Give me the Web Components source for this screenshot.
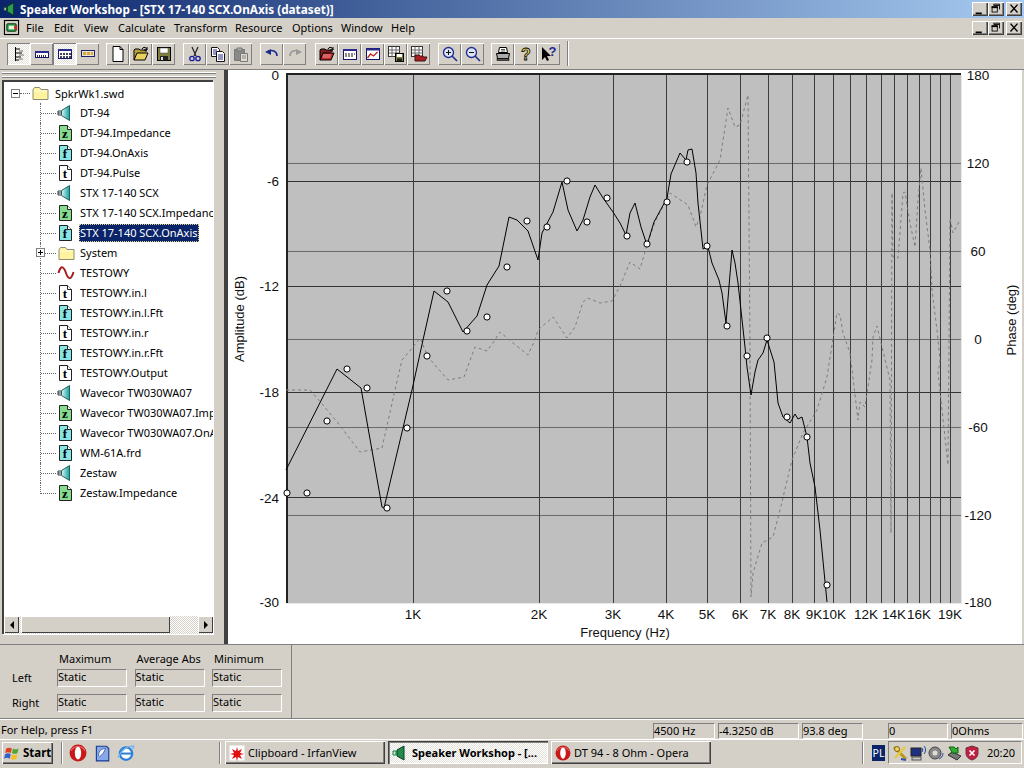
<!DOCTYPE html>
<html><head><meta charset="utf-8"><title>Speaker Workshop</title>
<style>html,body{margin:0;padding:0;background:#D4D0C8;overflow:hidden}</style>
</head><body>
<sw-app>
  <sw-titlebar>Speaker Workshop - [STX 17-140 SCX.OnAxis (dataset)]</sw-titlebar>
  <sw-menubar></sw-menubar>
  <sw-toolbar></sw-toolbar>
  <sw-workspace>
    <sw-tree></sw-tree>
    <sw-chart></sw-chart>
  </sw-workspace>
  <sw-stats></sw-stats>
  <sw-status></sw-status>
  <sw-taskbar></sw-taskbar>
</sw-app>
<script>
const FONT='"Noto Sans","Liberation Sans",sans-serif';
const s=(b,w=16,h=16)=>`<svg xmlns="http://www.w3.org/2000/svg" width="${w}" height="${h}" viewBox="0 0 16 16" style="display:block;overflow:visible">${b}</svg>`;
const docL=(fill,l,fs=11)=>s(`<path d="M2.5 .5h8l4 4v11h-12z" fill="${fill}" stroke="#222"/><path d="M10.5 .5v4h4" fill="#fff" stroke="#222"/><text x="8" y="13" text-anchor="middle" font-family="'Liberation Serif',serif" font-weight="700" font-size="${fs+2}" fill="#000">${l}</text>`);
const I={
 speaker:s(`<defs><linearGradient id="sp" x1="0" x2="1"><stop offset="0" stop-color="#d8f4f2"/><stop offset="1" stop-color="#12a2a0"/></linearGradient></defs><path d="M1 6h3M1 8h3M1 10h3M1 6v4" stroke="#333" fill="none"/><path d="M4.5 5.500 12.500 .5v15l-8-5z" fill="url(#sp)" stroke="#26605e"/>`),
 z:docL('#86dc8c','z'),f:docL('#86e6e6','f'),t:docL('#fff','t'),
 folder:s(`<path d="M.5 4.500 2 2.500h5l1.500 2h7v10h-15z" fill="#fff3a0" stroke="#8c8c70"/><path d="M1.500 5.500h13v1h-13z" fill="#fffce0"/>`,19,16),
 wave:s(`<path d="M.5 8C3-1 6 2 8 8s5 8 7.500-1" fill="none" stroke="#a81e1e" stroke-width="2"/>`,18,16),
 tv:s(`<path d="M4.500 1v14" stroke="#000"/><path d="M5 3h4M5 7h6M5 11h5M5 14h3" stroke="#000"/><path d="M8 5h4M8 9h5M8 13h4" stroke="#777"/>`),
 b1:s(`<rect x="1.500" y="5.500" width="13" height="6" fill="#fff" stroke="#15156a"/><path d="M1 5h14v2H1z" fill="#2a2a8e"/><path d="M3 9h1v2H3zM5 9h1v2H5zM7 9h1v2H7zM9 9h1v2H9zM11 9h1v2h-1z" fill="#333"/>`),
 b2:s(`<rect x="1.500" y="3.500" width="13" height="9" fill="#fff" stroke="#15156a"/><path d="M1 3h14v2H1z" fill="#2a2a8e"/><path d="M3 7h2v2H3zM6 7h2v2H6zM9 7h2v2H9zM12 7h2v2h-2zM3 10h2v2H3zM6 10h2v2H6zM9 10h2v2H9zM12 10h2v2h-2z" fill="#445"/>`),
 b3:s(`<rect x="1.500" y="4.500" width="13" height="6" fill="#e8e4dc" stroke="#22226a"/><path d="M3 6h3v3H3zM7 6h3v3H7zM11 6h2v3h-2z" fill="#d8a830"/>`),
 neu:s(`<path d="M3 .5h7l3 3v12H3z" fill="#fff" stroke="#000"/><path d="M10 .5v3h3" fill="none" stroke="#000"/>`),
 open:s(`<path d="M1 14V4l1-1h4l1 1h6v2" fill="#b8a040" stroke="#000"/><path d="M1 14l3-7h11l-3 7z" fill="#e8d060" stroke="#000"/><path d="M9 3c1-2 3-2 4-1l1 2m0-3v3h-3" fill="none" stroke="#000"/>`),
 save:s(`<rect x="1.500" y="1.500" width="13" height="13" fill="#808040" stroke="#000"/><rect x="4" y="2" width="8" height="5" fill="#fff" stroke="#444" stroke-width=".5"/><rect x="4" y="10" width="8" height="4.500" fill="#222"/><rect x="5" y="11" width="2" height="3" fill="#ddd"/>`),
 cut:s(`<path d="M5 1l4 9M11 1L7 10" stroke="#222" stroke-width="1.200" fill="none"/><circle cx="5" cy="12.500" r="2.200" fill="none" stroke="#1a1aa0" stroke-width="1.300"/><circle cx="11" cy="12.500" r="2.200" fill="none" stroke="#1a1aa0" stroke-width="1.300"/>`),
 copy:s(`<path d="M1.500 1.500h6l2 2v7h-8z" fill="#fff" stroke="#111"/><path d="M6.500 5.500h6l2 2v8h-8z" fill="#fff" stroke="#111"/><path d="M3 4h4M3 6h4M3 8h3M8 9h5M8 11h5M8 13h5" stroke="#2a2a8e"/>`),
 paste:s(`<path d="M1.500 3.500h10v11h-10z" fill="#8a8a8a" stroke="#777"/><path d="M4 2h5v3H4z" fill="#aaa" stroke="#777"/><path d="M7.500 7.500h7v8h-7z" fill="#dedad2" stroke="#777"/><path d="M9 10h4M9 12h4" stroke="#888"/>`),
 undo:s(`<path d="M3 6c5-3 10-1 10 4" fill="none" stroke="#1a2a8e" stroke-width="1.600"/><path d="M1 6l6-3v6z" fill="#1a2a8e"/>`),
 redo:s(`<path d="M13 6C8 3 3 5 3 10" fill="none" stroke="#999" stroke-width="1.600"/><path d="M15 6L9 3v6z" fill="#999"/>`),
 ropen:s(`<path d="M1 14V4l1-1h4l1 1h6v2" fill="#802020" stroke="#000"/><path d="M1 14l3-7h11l-3 7z" fill="#c02828" stroke="#000"/><path d="M4 9h8M3.500 11h8" stroke="#e8a0a0"/><path d="M9 3c1-2 3-2 4-1l1 2m0-3v3h-3" fill="none" stroke="#000"/>`),
 win1:s(`<rect x="1.500" y="3.500" width="13" height="10" fill="#fff" stroke="#15156a"/><path d="M1 3h14v2H1z" fill="#2a2a8e"/><path d="M3 8h10M3 10h9" stroke="#111" stroke-dasharray="2 1"/>`),
 win2:s(`<rect x="1.500" y="2.500" width="13" height="11" fill="#fff" stroke="#15156a"/><path d="M1 2.500h14v2H1z" fill="#2a2a8e"/><path d="M2.500 12l3-4 3 2 4-4" fill="none" stroke="#c02020" stroke-width="1.300"/>`),
 gsave:s(`<rect x=".5" y=".5" width="11" height="10" fill="#fff" stroke="#333"/><path d="M4 1v10M8 1v10M1 4h11M1 7h11" stroke="#666"/><rect x="7.500" y="7.500" width="8" height="8" fill="#808040" stroke="#000"/><rect x="9" y="8" width="5" height="3" fill="#fff"/><rect x="9" y="12.500" width="5" height="3" fill="#222"/>`),
 gopen:s(`<rect x=".5" y=".5" width="11" height="10" fill="#fff" stroke="#333"/><path d="M4 1v10M8 1v10M1 4h11M1 7h11" stroke="#666"/><path d="M4 15V9h4l1 1h3v1l4 0-2 4z" fill="#a82020" stroke="#401010"/>`),
 zin:s(`<circle cx="6.500" cy="6.500" r="5" fill="#dde2f5" stroke="#1d2a90" stroke-width="1.300"/><path d="M10 10l5 5" stroke="#1d2a90" stroke-width="1.600"/><path d="M4 6.500h5M6.500 4v5" stroke="#111"/>`),
 zout:s(`<circle cx="6.500" cy="6.500" r="5" fill="#dde2f5" stroke="#1d2a90" stroke-width="1.300"/><path d="M10 10l5 5" stroke="#1d2a90" stroke-width="1.600"/><path d="M4 6.500h5" stroke="#111"/>`),
 print:s(`<path d="M4.500 1.500h7l1 5h-9z" fill="#fff" stroke="#000"/><path d="M1.500 7.500h13l-1 5h-11z" fill="#aaa" stroke="#000"/><path d="M2 12.500h12v2H2z" fill="#555" stroke="#000" stroke-width=".6"/><path d="M6 3.500h4M6 5h4" stroke="#555"/>`),
 help:s(`<text x="8" y="13.500" text-anchor="middle" font-family="'Liberation Sans',sans-serif" font-weight="700" font-size="16" fill="#f0e060" stroke="#000" stroke-width=".8">?</text>`),
 chelp:s(`<path d="M1 1v13l3-3 2 4 2-1-2-4h4z" fill="#000"/><text x="11.500" y="10" text-anchor="middle" font-family="'Liberation Sans',sans-serif" font-weight="700" font-size="13" fill="#1d2a90">?</text>`),
 app:s(`<path d="M1 6h3v4H1z" fill="#9ed09e" stroke="#134"/><path d="M5 5l7-4v14l-7-4z" fill="#2c9c4c" stroke="#0a3a20"/>`),
 mdi:s(`<rect x=".5" y=".5" width="15" height="15" fill="#d4d0c8" stroke="#000" stroke-width="1.200"/><rect x="3" y="4" width="10" height="8" rx="1" fill="#28a048" stroke="#103010"/><rect x="5" y="6" width="6" height="4" fill="#e8f4e0"/><rect x="11" y="6" width="3" height="4" fill="#d02020"/>`),
 flag:s(`<path d="M2 4c2-1 3-1 5 0l-1 4c-2-1-3-1-5 0z" fill="#e04020"/><path d="M8 4c2 1 3 1 5 0l-1 4c-2 1-3 1-5 0z" fill="#50a830"/><path d="M1 9c2-1 3-1 5 0l-1 4c-2-1-3-1-5 0z" fill="#3060d0"/><path d="M7 9c2 1 3 1 5 0l-1 4c-2 1-3 1-5 0z" fill="#f0c020"/>`,18,18),
 opera:s(`<circle cx="8" cy="8" r="7.500" fill="#c81818"/><ellipse cx="8" cy="8" rx="2.800" ry="5.800" fill="#fff"/><path d="M2 6c2-5 10-5 12 0" fill="none" stroke="#e87070"/>`,17,17),
 ql2:s(`<path d="M3 2h9l2 2v11H3z" fill="#88a8e8" stroke="#1a3a90"/><path d="M5 10c0-4 3-6 6-6-1 3-2 5-5 7z" fill="#fff" stroke="#1a3a90" stroke-width=".6"/>`,18,18),
 ie:s(`<circle cx="8" cy="8.500" r="5.500" fill="#fff" stroke="#2a80d8" stroke-width="2"/><path d="M3 8.500h10" stroke="#2a80d8" stroke-width="1.800"/><path d="M1 12C4 5 10 1 15 2c0 1-1 2-2 3" fill="none" stroke="#70b0f0" stroke-width="1.200"/>`,18,18),
 irfan:s(`<rect x=".5" y=".5" width="15" height="15" fill="#fff"/><path d="M8 2l1 4 4-2-2 4 4 1-4 1 2 4-4-2-1 4-1-4-4 2 2-4-4-1 4-1-2-4 4 2z" fill="#e01010"/>`),
 swt:s(`<path d="M1 6h3v4H1z" fill="#cfe8cf" stroke="#184"/><path d="M5 5l7-4v14l-7-4z" fill="#1f8c4a" stroke="#0a3a20"/>`),
 keys:s(`<path d="M2 2l12 12" stroke="#b89820" stroke-width="3"/><path d="M13 2L3 13" stroke="#e8c840" stroke-width="2.500"/><circle cx="5" cy="4" r="2.500" fill="#f0d860" stroke="#806010"/><path d="M9 14l5 1" stroke="#3050b0" stroke-width="2"/>`,18,18),
 net:s(`<rect x="1" y="3" width="10" height="8" fill="#203080" stroke="#222"/><rect x="2" y="12" width="9" height="3" fill="#c8c8c8" stroke="#555"/><path d="M12 3c1 1 1 3 0 4M14 1c2 2 2 6 0 8" fill="none" stroke="#2040a0"/>`,18,18),
 vol:s(`<circle cx="7" cy="8" r="6" fill="#888" stroke="#444"/><circle cx="7" cy="8" r="2.500" fill="#ddd"/><path d="M11 14c2-1 4-3 4-6" fill="none" stroke="#5060b0" stroke-width="1.200"/>`,18,18),
 arr:s(`<path d="M2 10l9 5 4-4-9-4z" fill="#777" stroke="#333"/><path d="M3 2l3 5-1 1h7l0-6-2 2-2-2z" fill="#30b030" stroke="#106010"/>`,18,18),
 shield:s(`<path d="M8 1l6 2v5c0 4-3 6-6 7-3-1-6-3-6-7V3z" fill="#c02040" stroke="#703040"/><path d="M5.500 5.500l5 5M10.500 5.500l-5 5" stroke="#fff" stroke-width="1.600"/>`,18,18),
};
function el(name,css,render){
  customElements.define(name,class extends HTMLElement{
    constructor(){super();this.attachShadow({mode:'open'})}
    connectedCallback(){this.shadowRoot.innerHTML=`<style>${css}</style>`+render(this)}
  });
}
el('sw-app',`:host{display:flex;flex-direction:column;width:1024px;height:768px;overflow:hidden;background:#D4D0C8;color:#000;font:11px ${FONT}}`,()=>`<slot></slot>`);

el('sw-winbtn',`:host{display:block;width:16px;height:14px;background:#D4D0C8;box-shadow:inset 1px 1px #fff,inset -1px -1px #404040,inset -2px -2px #808080}`,
 h=>({min:s(`<path d="M3 12h7v2H3z" fill="#000"/>`,16,14),res:s(`<path d="M6 2.500h6v6M5.500 2v2h6" fill="none" stroke="#000"/><rect x="3.500" y="5.500" width="6" height="6" fill="none" stroke="#000"/><path d="M3 5h7v2H3z" fill="#000"/>`,16,14),cls:s(`<path d="M4 3l8 9M12 3l-8 9" stroke="#000" stroke-width="1.600"/>`,16,14)})[h.getAttribute('k')]);
const winBtns=`<div class="wb"><sw-winbtn k="min"></sw-winbtn><sw-winbtn k="res"></sw-winbtn><sw-winbtn k="cls" style="margin-left:2px"></sw-winbtn></div>`;

el('sw-titlebar',`:host{display:flex;align-items:center;height:18px;flex:none;background:linear-gradient(90deg,#0A246A,#A6CAF0);color:#fff;font:700 11.750px ${FONT}}
 .ic{margin:0 3px 0 3px}.t{flex:1;white-space:nowrap}.wb{display:flex;margin-right:2px;margin-top:-1px}`,
 ()=>`<span class="ic">${I.app.replace('width="16" height="16"','width="14" height="14"')}</span><span class="t"><slot></slot></span>${winBtns}`);

el('sw-menubar',`:host{display:flex;align-items:center;height:21px;flex:none;box-sizing:border-box;padding-bottom:1px;border-bottom:1px solid #fff;font:11px ${FONT}}
 .ic{margin:0 7px 0 4px}.m{flex:none;margin-top:-1px}.sp{flex:1}.wb{display:flex;margin-right:2px}`,
 ()=>{const it=[['File',28],['Edit',30],['View',34],['Calculate',56],['Transform',61],['Resource',57],['Options',49],['Window',50],['Help',40]];
 return `<span class="ic">${I.mdi.replace('width="16" height="16"','width="15" height="15"')}</span>`+it.map(([t,w])=>`<span class="m" style="width:${w}px">${t}</span>`).join('')+`<span class="sp"></span>${winBtns}`});

el('sw-tb',`:host{display:flex;align-items:center;justify-content:center;width:23px;height:22px;flex:none;box-shadow:inset 1px 1px #fff,inset -1px -1px #808080}
 :host([on]){background:repeating-conic-gradient(#fff 0 25%,#e4e1da 0 50%) 0 0/2px 2px;box-shadow:inset 1px 1px #808080,inset -1px -1px #fff}`,h=>I[h.getAttribute('i')]);

el('sw-toolbar',`:host{display:flex;align-items:flex-start;flex:none;padding:4px 0 0 7px;border-bottom:1px solid #808080;box-sizing:border-box;height:31px}
 .g{display:flex}.sep{height:25px;margin:-2px 0 0 7px;border-left:1px solid #808080;background:#fff;box-sizing:border-box;width:2px}`,
 ()=>{const G=[[0,'tv b1 b2 b3'],[7,'neu open save'],[8,'cut copy paste'],[8,'undo redo'],[9,'ropen win1 win2 gsave gopen'],[8,'zin zout'],[7,'print help chelp']];
 return G.map(([m,g])=>`<div class="g" style="margin-left:${m}px">`+g.split(' ').map(i=>`<sw-tb i="${i}"${(i=='tv'||i=='b2')?' on':''}></sw-tb>`).join('')+`</div>`).join('')+`<div class="sep"></div>`});

el('sw-workspace',`:host{display:flex;height:574px;flex:none;background:#D4D0C8}`,()=>`<slot></slot>`);

el('sw-ti',`:host{display:flex;align-items:center;height:20px;white-space:nowrap}
 .c{position:relative;width:17px;height:20px;margin-left:36px;flex:none;border-left:1px dotted #666;box-sizing:border-box}
 .c::after{content:"";position:absolute;left:0;top:10px;width:15px;border-top:1px dotted #666}
 :host([last]) .c{height:11px;align-self:flex-start}
 .x{position:absolute;left:-5px;top:5px;width:9px;height:9px;background:#fff;border:1px solid #808080;box-sizing:border-box;z-index:1}
 .x::before{content:"";position:absolute;left:1px;right:1px;top:3px;height:1px;background:#000}
 .x::after{content:"";position:absolute;top:1px;bottom:1px;left:3px;width:1px;background:#000}
 .i{width:22px;flex:none;display:block}
 .l{padding:0 1px;height:18px;font:11px/18px ${FONT}}
 :host([sel]) .l{background:#0A246A;color:#fff;outline:1px dotted #e0d090;outline-offset:-1px}`,
 h=>`<span class="c">${h.hasAttribute('plus')?'<span class="x"></span>':''}</span><span class="i">${I[h.getAttribute('i')]}</span><span class="l">${h.getAttribute('t')}</span>`);

el('sw-tree',`:host{display:flex;flex-direction:column;flex:none;box-sizing:border-box;border-right:4px solid #404040;width:228px;height:574px}
 .gr{height:8px;flex:none;margin:2px 8px 0 2px;background:repeating-linear-gradient(#fff 0 1px,#808080 1px 2px,#D4D0C8 2px 4px)}
 .fr{margin:0 11px 0 2px;height:554px;display:flex;flex-direction:column;border-top:2px solid #404040;border-left:2px solid #404040;box-shadow:1px 1px #fff;background:#fff;box-sizing:border-box;overflow:hidden}
 .bd{flex:1;overflow:hidden;padding-top:1px}
 .root{display:flex;align-items:center;height:20px}
 .root .b{width:9px;height:9px;margin:0 0 0 7px;border:1px solid #808080;box-sizing:border-box;position:relative;flex:none}
 .root .b::before{content:"";position:absolute;left:1px;right:1px;top:3px;height:1px;background:#000}
 .root .d{width:10px;border-top:1px dotted #666;flex:none;margin-right:1px}
 .root .ft{width:24px;flex:none}
 .root .l{font:11px ${FONT}}
 .sb{height:18px;flex:none;display:flex;background:repeating-conic-gradient(#fff 0 25%,#d4d0c8 0 50%) 0 0/2px 2px;padding-bottom:1px;box-sizing:border-box}
 .btn{width:15px;flex:none;background:#D4D0C8;box-shadow:inset 1px 1px #fff,inset -1px -1px #404040;display:flex;align-items:center;justify-content:center}
 .th{width:149px;margin-left:2px;background:#D4D0C8;box-shadow:inset 1px 1px #fff,inset -1px -1px #404040}
 .tr{flex:1}`,
 ()=>{const R=[['speaker','DT-94'],['z','DT-94.Impedance'],['f','DT-94.OnAxis'],['t','DT-94.Pulse'],['speaker','STX 17-140 SCX'],['z','STX 17-140 SCX.Impedance'],['f','STX 17-140 SCX.OnAxis','sel'],['folder','System','plus'],['wave','TESTOWY'],['t','TESTOWY.in.l'],['f','TESTOWY.in.l.Fft'],['t','TESTOWY.in.r'],['f','TESTOWY.in.r.Fft'],['t','TESTOWY.Output'],['speaker','Wavecor TW030WA07'],['z','Wavecor TW030WA07.Impedance'],['f','Wavecor TW030WA07.OnAxis'],['f','WM-61A.frd'],['speaker','Zestaw'],['z','Zestaw.Impedance','last']];
 return `<div class="gr"></div><div class="fr"><div class="bd"><div class="root"><span class="b"></span><span class="d"></span><span class="ft">${I.folder}</span><span class="l">SpkrWk1.swd</span></div>`+
 R.map(r=>`<sw-ti i="${r[0]}" t="${r[1]}" ${r[2]||''}></sw-ti>`).join('')+
 `</div><div class="sb"><div class="btn"><svg width="6" height="8"><path d="M5 0v8L1 4z"/></svg></div><div class="th"></div><div class="tr"></div><div class="btn"><svg width="6" height="8"><path d="M1 0v8l4-4z"/></svg></div></div></div>`});

el('sw-chart',`:host{display:block;width:796px;height:574px;flex:none;background:#fff}
 svg{display:block;overflow:visible} text{font-family:"Liberation Sans",sans-serif;font-size:13.500px;fill:#111}
 text.a{font-size:13px}`,()=>{
 const P={l:286,t:75,r:961,b:603};
 const V=[413,539,613,666,707,740,768,792,814,833,850,866,881,894,907,919,930,940,950];
 const HD=[181,286,392,497], HL=[163,251,339,427,515];
 const solid=[[286,470],[337,369],[361,388],[382,507],[384,508],[412,390],[423,340],[434,291],[448,302],[463,332],[477,316],[487,285],[499,266],[509,217],[517,220],[528,231],[538,260],[542,233],[553,212],[562,182],[568,210],[577,231],[583,220],[590,197],[595,185],[603,198],[613,212],[620,223],[626,235],[630,213],[635,203],[641,227],[647,245],[654,222],[667,198],[671,174],[680,153],[686,160],[688,150],[692,149],[696,173],[698,203],[703,249],[708,247],[712,263],[719,280],[722,293],[726,323],[732,250],[735,263],[738,283],[745,347],[747,367],[751,395],[755,372],[758,360],[763,353],[767,340],[774,362],[778,403],[783,417],[790,423],[795,414],[798,419],[802,417],[807,437],[810,463],[815,487],[820,530],[827,602]];
 const dash=[[286,390],[310,390],[323,405],[338,423],[360,452],[382,448],[395,390],[402,360],[413,347],[420,338],[428,357],[448,380],[464,377],[475,347],[487,351],[495,340],[500,332],[513,343],[528,355],[535,340],[538,330],[553,317],[567,338],[575,327],[583,302],[588,298],[600,303],[612,301],[620,286],[630,262],[640,269],[647,245],[655,222],[670,193],[688,205],[696,227],[700,217],[707,185],[720,160],[728,108],[735,127],[740,125],[748,95],[750,347],[751,597],[753,573],[762,543],[773,537],[780,510],[792,460],[803,433],[817,410],[827,377],[832,345],[837,313],[840,315],[843,333],[850,353],[858,420],[860,402],[865,407],[872,360],[873,337],[877,326],[882,347],[890,380],[891,533],[892,193],[893,257],[898,258],[903,193],[905,192],[910,223],[915,247],[918,200],[921,168],[925,210],[930,250],[932,290],[937,330],[940,360],[938,373],[948,465],[950,218],[953,233],[959,222]];
 const mk=[[287,493],[307,493],[327,421],[347,369],[367,388],[387,508],[407,428],[427,356],[447,291],[467,331],[487,317],[507,267],[527,221],[547,227],[567,181],[587,222],[607,198],[627,236],[647,244],[667,202],[687,162],[707,246],[727,326],[747,356],[767,338],[787,417],[807,437],[827,585]];
 const pts=a=>a.map(p=>p.join(',')).join(' ');
 const xl=[['1K',413],['2K',539],['3K',613],['4K',666],['5K',707],['6K',740],['7K',768],['8K',792],['9K',814],['10K',834],['12K',866],['14K',894],['16K',919],['19K',950]];
 const yl=[['0',75],['-6',181],['-12',286],['-18',392],['-24',498],['-30',602]];
 const pl=[['180',75],['120',163],['60',251],['0',339],['-60',427],['-120',515],['-180',602]];
 return `<svg xmlns="http://www.w3.org/2000/svg" width="796" height="574" viewBox="228 70 796 574">
 <rect x="1022" y="70" width="2" height="574" fill="#D4D0C8"/>
 <rect x="${P.l}" y="${P.t}" width="${P.r-P.l}" height="${P.b-P.t}" fill="#BFBFBF"/>
 <g shape-rendering="crispEdges">
 ${HL.map(y=>`<path d="M${P.l} ${y}.5H${P.r}" stroke="#6a6a6a"/>`).join('')}
 ${HD.map(y=>`<path d="M${P.l} ${y}.5H${P.r}" stroke="#333"/>`).join('')}
 ${V.map(x=>`<path d="M${x}.5 ${P.t}V${P.b}" stroke="#3c3c3c"/>`).join('')}
 <path d="M${P.l}.5 ${P.b}V${P.t-1}H${P.r}" fill="none" stroke="#222" stroke-width="2"/>
 <path d="M${P.l} ${P.b}.5H${P.r}.5V${P.t}" fill="none" stroke="#e8e8e8"/>
 </g>
 <polyline points="${pts(dash)}" fill="none" stroke="#7c7c7c" stroke-dasharray="3 3"/>
 <polyline points="${pts(solid)}" fill="none" stroke="#000"/>
 ${mk.map(p=>`<circle cx="${p[0]}" cy="${p[1]}" r="3.100" fill="#fff" stroke="#000"/>`).join('')}
 ${xl.map(a=>`<text x="${a[1]}" y="619" text-anchor="middle">${a[0]}</text>`).join('')}
 ${yl.map(a=>`<text x="279" y="${a[1]+5}" text-anchor="end">${a[0]}</text>`).join('')}
 ${pl.map(a=>`<text x="978" y="${a[1]+5}" text-anchor="middle">${a[0]}</text>`).join('')}
 <text class="a" x="625" y="637" text-anchor="middle">Frequency (Hz)</text>
 <text class="a" transform="translate(244 319) rotate(-90)" text-anchor="middle">Amplitude (dB)</text>
 <text class="a" transform="translate(1016 320) rotate(-90)" text-anchor="middle">Phase (deg)</text>
 </svg>`});

el('sw-field',`:host{display:block;box-sizing:border-box;height:18px;border:1px solid;border-color:#808080 #fff #fff #808080;font:11px/14px ${FONT};white-space:nowrap;overflow:hidden}`,()=>`<slot></slot>`);

el('sw-stats',`:host{display:block;height:74px;flex:none;box-sizing:border-box;border-top:1px solid #808080}
 .g{width:292px;height:73px;box-sizing:border-box;border-right:1px solid #808080;display:grid;grid-template-columns:49.500px 70px 70px 70px;column-gap:7.500px;grid-template-rows:16px 3px 18px 7px 18px;row-gap:0;padding-top:5px;font:11px ${FONT};align-items:center}
 .h{padding-left:2px}.r{padding-left:12px;margin-top:-1px}
 sw-field{align-self:start}`,
 ()=>`<div class="g"><span></span><span class="h">Maximum</span><span class="h">Average Abs</span><span class="h">Minimum</span>
 <span style="grid-column:1/5"></span>
 <span class="r">Left</span><sw-field>Static</sw-field><sw-field>Static</sw-field><sw-field>Static</sw-field>
 <span style="grid-column:1/5"></span>
 <span class="r">Right</span><sw-field>Static</sw-field><sw-field>Static</sw-field><sw-field>Static</sw-field></div>`);

el('sw-status',`:host{display:flex;align-items:center;height:21px;flex:none;box-sizing:border-box;border-top:1px solid #808080;box-shadow:inset 0 1px #fff;font:11px ${FONT};padding-top:3px}
 .t{flex:1;padding-left:1px;margin-top:-3px}
 .f{box-sizing:border-box;height:16px;border:1px solid;border-color:#808080 #fff #fff #808080;line-height:13px;flex:none;white-space:nowrap}`,
 ()=>`<span class="t">For Help, press F1</span><span class="f" style="width:62px">4500 Hz</span><span class="f" style="width:81px;margin-left:3px">-4.3250 dB</span><span class="f" style="width:61px;margin-left:3px">93.8 deg</span><span class="f" style="width:60px;margin-left:25px">0</span><span class="f" style="width:72px;margin-left:3px;margin-right:1px">0Ohms</span>`);

el('sw-tk',`:host{display:flex;align-items:center;width:160px;height:23px;flex:none;box-sizing:border-box;padding-left:4px;gap:3px;box-shadow:inset 1px 1px #fff,inset -1px -1px #404040,inset -2px -2px #808080;white-space:nowrap;overflow:hidden}
 :host([on]){background:repeating-conic-gradient(#fff 0 25%,#e4e1da 0 50%) 0 0/2px 2px;box-shadow:inset 1px 1px #404040,inset 2px 2px #808080,inset -1px -1px #fff;font-weight:700}`,
 h=>`${I[h.getAttribute('i')].replace(/width="\d+" height="\d+"/,'width="16" height="16"')}<span style="margin-left:${h.getAttribute('m')||0}px"><slot></slot></span>`);

el('sw-taskbar',`:host{display:flex;align-items:center;height:29px;flex:none;box-sizing:border-box;border-top:1px solid #fff;font:11px ${FONT};padding:0 0 3px 2px}
 .st{display:flex;align-items:center;width:51px;height:22px;box-sizing:border-box;padding-left:2px;gap:1px;font:700 11.500px ${FONT};flex:none;box-shadow:inset 1px 1px #fff,inset -1px -1px #404040,inset -2px -2px #808080}
 .sp{width:2px;height:22px;flex:none;border-left:1px solid #808080;background:#fff;box-sizing:border-box}
 .q{display:flex;flex:none;gap:6px;margin-left:6px}
 .tray{display:flex;align-items:center;width:134px;height:23px;flex:none;box-sizing:border-box;border:1px solid;border-color:#808080 #fff #fff #808080;margin-left:3px;padding-left:3px}
 .tray svg{width:16px;height:16px;margin-right:2px}
 .pl{width:13px;height:16px;flex:none;background:#0A246A;color:#fff;font:10.500px/16px ${FONT};text-align:center;margin-left:8px}
 .clk{margin-left:5px}`,
 ()=>`<div class="st">${I.flag}<span>Start</span></div><div class="sp" style="margin-left:8px"></div>
 <div class="q">${I.opera.replace('width="17" height="17"','width="18" height="18"')}${I.ql2}${I.ie}</div>
 <div class="sp" style="margin-left:84px;margin-right:4px"></div>
 <sw-tk i="irfan">Clipboard - IrfanView</sw-tk>
 <sw-tk i="swt" on m="1" style="margin-left:3px">Speaker Workshop - [...</sw-tk>
 <sw-tk i="opera" style="margin-left:3px">DT 94 - 8 Ohm - Opera</sw-tk>
 <div class="sp" style="margin-left:151px"></div>
 <div class="pl">PL</div>
 <div class="tray">${I.keys}${I.net}${I.vol}${I.arr}${I.shield}<span class="clk">20:20</span></div>`);
</script>
</body></html>
